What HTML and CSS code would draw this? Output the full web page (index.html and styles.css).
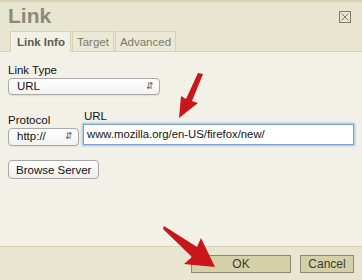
FILE: index.html
```html
<!DOCTYPE html>
<html lang="en">
<head>
    <meta charset="UTF-8">
    <title>Link</title>
    <link rel="stylesheet" href="styles.css">
</head>
<body>
<div class="dialog">
    <div class="header">
        <div class="title-row">
            <h1>Link</h1>
            <span class="close" title="Close">
                <svg width="12" height="12" viewBox="0 0 12 12">
                    <rect x="0.5" y="0.5" width="11" height="11" fill="none" stroke="#7d7c6c"/>
                    <path d="M2.5 2.5 L9.5 9.5 M9.5 2.5 L2.5 9.5" stroke="#7d7c6c" stroke-width="1"/>
                </svg>
            </span>
        </div>
        <div class="tabs">
            <span class="tab active">Link Info</span>
            <span class="tab">Target</span>
            <span class="tab">Advanced</span>
        </div>
    </div>
    <div class="content">
        <label class="field-label">Link Type</label>
        <div class="select wide-select">URL<span class="updown">&#8693;</span></div>

        <div class="url-row">
            <div class="protocol">
                <label class="field-label">Protocol</label>
                <div class="select small-select">http://<span class="updown">&#8693;</span></div>
            </div>
            <div class="url">
                <label class="field-label">URL</label>
                <div class="input">www.mozilla.org/en-US/firefox/new/</div>
            </div>
        </div>

        <div class="browse-row">
            <button class="browse">Browse Server</button>
        </div>
    </div>
    <div class="footer">
        <button class="btn ok">OK</button>
        <button class="btn cancel">Cancel</button>
    </div>

    <!-- red annotation arrows drawn over the dialog -->
    <svg class="arrow arrow-url" width="30" height="50" viewBox="0 0 30 50">
        <path d="M27 2 L16 29 L22 31 L3 46 L5 24 L10 27 L22 1 Z" fill="#c8161b"/>
    </svg>
    <svg class="arrow arrow-ok" width="60" height="50" viewBox="0 0 60 50">
        <path d="M1 4 L34 25 L38 16 L52 45 L21 42 L29 35 L0 7 Z" fill="#c8161b"/>
    </svg>
</div>
</body>
</html>
```

FILE: styles.css
```css
body {
  margin: 0;
  padding: 0;
  font-family: "Liberation Sans", Arial, sans-serif;
  font-size: 11px;
  color: #111;
}

.dialog {
  position: relative;
  width: 362px;
  height: 280px;
  display: flex;
  flex-direction: column;
  background: #f3f1e7;
  overflow: hidden;
}

.header {
  background: #e8e5d0;
  border-top: 2px solid #d8d4b2;
  border-bottom: 1px solid #d6d2b4;
  padding: 0 0 0 10px;
  height: 49px;
  display: flex;
  flex-direction: column;
}

.title-row {
  display: flex;
  justify-content: space-between;
  align-items: flex-start;
  height: 29px;
}

h1 {
  margin: 2px 0 0 -2px;
  font-size: 21px;
  font-weight: bold;
  color: #8b8a78;
  line-height: 24px;
}

.close {
  margin: 9px 11px 0 0;
  line-height: 0;
}

.tabs {
  display: flex;
  margin-top: auto;
  gap: 1px;
}

.tab {
  height: 19px;
  line-height: 20px;
  padding: 0 4px;
  border: 1px solid #d6d2b4;
  border-bottom: 0;
  background: #ebe8d5;
  color: #7b7a6a;
  font-size: 11.5px;
}

.tab.active {
  background: #f3f1e7;
  color: #5c5b4e;
  font-weight: bold;
  height: 20px;
  margin-bottom: -1px;
  padding: 0 5px 0 6px;
}

.content {
  flex: 1;
  padding: 11px 8px 0;
  display: flex;
  flex-direction: column;
}

.field-label {
  display: block;
  font-size: 11.5px;
  line-height: 14px;
  margin-bottom: 1px;
}

.select {
  position: relative;
  height: 15px;
  line-height: 15px;
  border: 1px solid #a9a9a9;
  border-radius: 4px;
  background: linear-gradient(#ffffff, #f2f2f2);
  padding: 0 0 0 8px;
  font-size: 11.5px;
  box-shadow: 0 1px 1px rgba(0, 0, 0, 0.08);
}

.wide-select {
  width: 142px;
}

.small-select {
  width: 61px;
}

.updown {
  position: absolute;
  right: 5px;
  top: 0;
  font-size: 9px;
  color: #666;
}

.url-row {
  display: flex;
  gap: 4px;
  margin-top: 14px;
}

.protocol {
  padding-top: 4px;
}

.protocol .select {
  height: 16px;
}

.url {
  flex: 1;
}

.url .field-label {
  margin-left: 1px;
}

.input {
  height: 19px;
  line-height: 19px;
  border: 1px solid #7da3c8;
  padding: 0 3px;
  background: #fff;
  box-shadow: 0 0 2px 1px #9cc0de;
  font-size: 11.3px;
}

.browse-row {
  margin-top: 14px;
}

.browse {
  font-family: "Liberation Sans", Arial, sans-serif;
  font-size: 11.5px;
  height: 19px;
  padding: 0 7px;
  border: 1px solid #a6a6a6;
  border-radius: 4px;
  background: linear-gradient(#ffffff, #eeeeee);
  color: #111;
}

.footer {
  background: #e8e5d0;
  border-top: 1px solid #d6d2b4;
  height: 34px;
  display: flex;
  justify-content: flex-end;
  align-items: flex-start;
  gap: 9px;
  padding: 8px 8px 0 0;
  box-sizing: border-box;
}

.btn {
  font-family: "Liberation Sans", Arial, sans-serif;
  font-size: 12px;
  height: 18px;
  border: 1px solid #8a8972;
  background: #d4d0a8;
  color: #3b3b30;
  padding: 0;
}

.ok {
  width: 100px;
}

.cancel {
  width: 54px;
}

.arrow {
  position: absolute;
}

.arrow-url {
  left: 176px;
  top: 72px;
}

.arrow-ok {
  left: 163px;
  top: 222px;
}
```
